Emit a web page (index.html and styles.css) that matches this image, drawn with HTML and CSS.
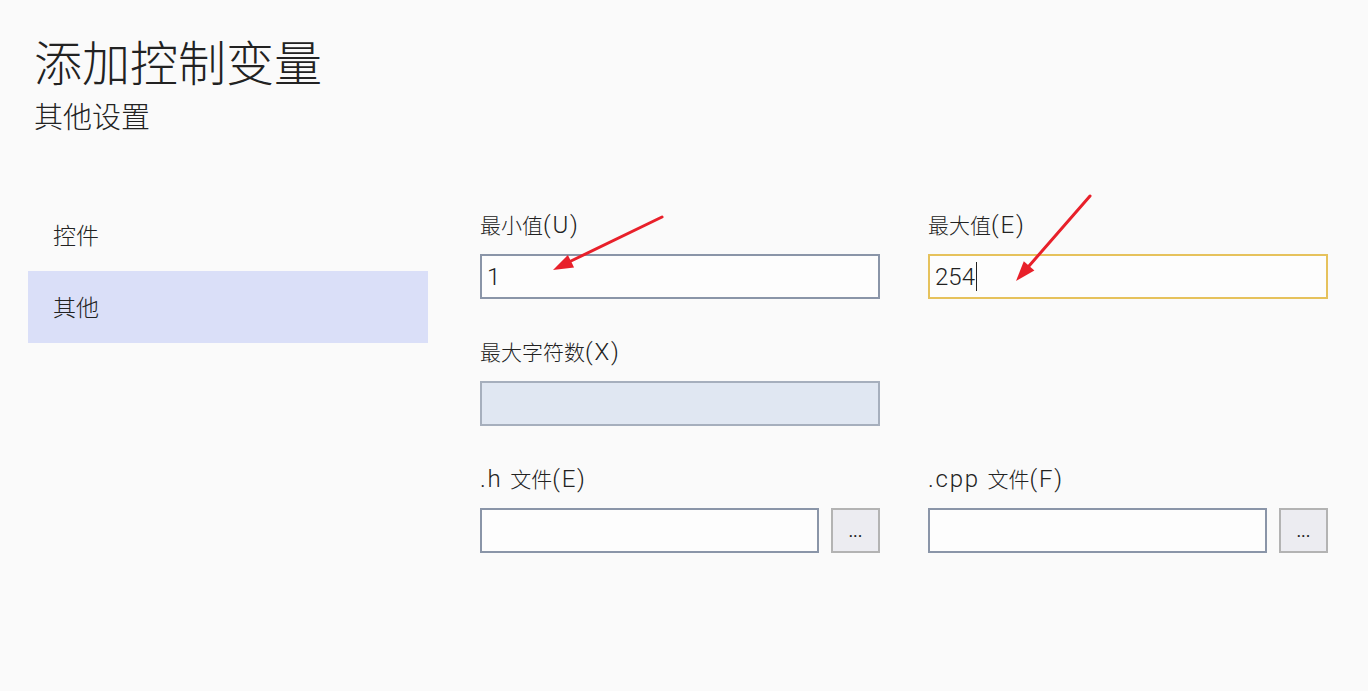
FILE: index.html
```html
<!DOCTYPE html>
<html lang="zh-CN">
<head>
<meta charset="utf-8">
<title>添加控制变量</title>
<link rel="stylesheet" href="styles.css">
</head>
<body>
<div class="page">
  <header class="header">
    <h1 class="title">添加控制变量</h1>
    <div class="subtitle">其他设置</div>
  </header>
  <div class="main">
    <nav class="sidebar">
      <div class="nav-item">控件</div>
      <div class="nav-item selected">其他</div>
    </nav>
    <div class="form">
      <div class="field">
        <div class="label">最小值<span class="latin">(U)</span></div>
        <div class="input"><span class="value">1</span></div>
      </div>
      <div class="field">
        <div class="label">最大值<span class="latin">(E)</span></div>
        <div class="input focused"><span class="value">254</span><span class="caret"></span></div>
      </div>
      <div class="field">
        <div class="label">最大字符数<span class="latin">(X)</span></div>
        <div class="input disabled"></div>
      </div>
      <div class="field empty"></div>
      <div class="field">
        <div class="label"><span class="latin">.h </span>文件<span class="latin">(E)</span></div>
        <div class="browse-row">
          <div class="input grow"></div>
          <div class="btn">...</div>
        </div>
      </div>
      <div class="field">
        <div class="label"><span class="latin">.cpp </span>文件<span class="latin">(F)</span></div>
        <div class="browse-row">
          <div class="input grow"></div>
          <div class="btn">...</div>
        </div>
      </div>
    </div>
  </div>
  <svg class="arrows" width="1368" height="691" viewBox="0 0 1368 691">
    <line x1="662" y1="217" x2="571" y2="261" stroke="#e8202a" stroke-width="3" stroke-linecap="round"/>
    <polygon points="553,270 567.9,254.9 574.1,267.5" fill="#e8202a"/>
    <line x1="1090" y1="196" x2="1029" y2="266" stroke="#e8202a" stroke-width="3" stroke-linecap="round"/>
    <polygon points="1016,281 1023.8,261.3 1034.4,270.5" fill="#e8202a"/>
  </svg>
</div>
</body>
</html>
```

FILE: styles.css
```css
html, body {
  margin: 0;
  padding: 0;
  background: #fafafa;
}

body {
  font-family: "Noto Sans CJK SC", "Noto Sans", sans-serif;
  color: #222222;
}

.page {
  position: relative;
  width: 1368px;
  height: 691px;
  overflow: hidden;
}

.header {
  padding: 28px 0 0 34px;
}

.title {
  margin: 0;
  font-size: 48px;
  font-weight: 300;
  line-height: 64px;
}

.subtitle {
  font-size: 29px;
  font-weight: 300;
  line-height: 40px;
  margin-top: 3px;
}

.main {
  display: flex;
  margin-top: 64px;
}

.sidebar {
  width: 400px;
  margin-left: 28px;
  display: flex;
  flex-direction: column;
}

.nav-item {
  height: 72px;
  display: flex;
  align-items: center;
  padding-left: 25px;
  padding-bottom: 2px;
  box-sizing: border-box;
  font-size: 23px;
  font-weight: 300;
}

.nav-item.selected {
  background: #dadff8;
}

.form {
  margin-left: 52px;
  padding-top: 10px;
  display: grid;
  grid-template-columns: 400px 400px;
  column-gap: 48px;
  row-gap: 37px;
  align-content: start;
}

.label {
  font-size: 21px;
  font-weight: 300;
  line-height: 30px;
  height: 30px;
  margin-bottom: 15px;
  white-space: nowrap;
}

.latin {
  font-family: "Roboto", "Noto Sans", sans-serif;
  font-size: 24px;
  font-weight: 300;
  letter-spacing: 1.8px;
}

.input {
  box-sizing: border-box;
  height: 45px;
  border: 2px solid #8a95a8;
  background: #fdfdfd;
  display: flex;
  align-items: center;
  padding-left: 5px;
}

.input.focused {
  border-color: #e6c25c;
}

.input.disabled {
  background: #e0e7f2;
  border-color: #a6afbd;
}

.value {
  font-family: "Roboto", "Noto Sans", sans-serif;
  font-size: 24px;
  font-weight: 300;
  line-height: 30px;
}

.caret {
  width: 1px;
  height: 29px;
  background: #222222;
  margin-left: 1px;
}

.browse-row {
  display: flex;
  gap: 12px;
}

.grow {
  flex: 1;
}

.btn {
  box-sizing: border-box;
  width: 49px;
  height: 45px;
  border: 2px solid #b3b3b3;
  background: #ececf1;
  display: flex;
  align-items: center;
  justify-content: center;
  font-family: "Roboto", sans-serif;
  font-size: 18px;
  line-height: 1;
  padding-top: 1px;
}

.arrows {
  position: absolute;
  top: 0;
  left: 0;
  pointer-events: none;
}
```
